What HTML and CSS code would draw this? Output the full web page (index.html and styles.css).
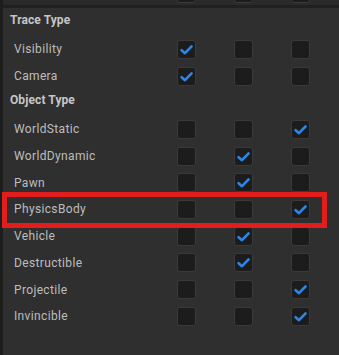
FILE: index.html
```html
<!DOCTYPE html>
<html lang="en">
<head>
	<meta charset="UTF-8">
	<title>Collision Responses</title>
	<link rel="stylesheet" href="styles.css">
</head>
<body>
	<div class="panel">
		<div class="top_strip">
			<span class="cell"></span>
			<span class="box"></span>
			<span class="cell"></span>
			<span class="box"></span>
			<span class="cell"></span>
			<span class="box"></span>
		</div>
		<div class="separator"></div>

		<div class="heading">Trace Type</div>
		<div class="row">
			<span class="label">Visibility</span>
			<span class="box on"></span><span></span>
			<span class="box"></span><span></span>
			<span class="box"></span>
		</div>
		<div class="row">
			<span class="label">Camera</span>
			<span class="box on"></span><span></span>
			<span class="box"></span><span></span>
			<span class="box"></span>
		</div>

		<div class="heading heading_obj">Object Type</div>
		<div class="row">
			<span class="label">WorldStatic</span>
			<span class="box"></span><span></span>
			<span class="box"></span><span></span>
			<span class="box on"></span>
		</div>
		<div class="row">
			<span class="label">WorldDynamic</span>
			<span class="box"></span><span></span>
			<span class="box on"></span><span></span>
			<span class="box"></span>
		</div>
		<div class="row">
			<span class="label">Pawn</span>
			<span class="box"></span><span></span>
			<span class="box on"></span><span></span>
			<span class="box"></span>
		</div>
		<div class="row row_marked">
			<span class="label">PhysicsBody</span>
			<span class="box"></span><span></span>
			<span class="box"></span><span></span>
			<span class="box on"></span>
			<div class="highlight"></div>
		</div>
		<div class="row">
			<span class="label">Vehicle</span>
			<span class="box"></span><span></span>
			<span class="box on"></span><span></span>
			<span class="box"></span>
		</div>
		<div class="row">
			<span class="label">Destructible</span>
			<span class="box"></span><span></span>
			<span class="box on"></span><span></span>
			<span class="box"></span>
		</div>
		<div class="row">
			<span class="label">Projectile</span>
			<span class="box"></span><span></span>
			<span class="box"></span><span></span>
			<span class="box on"></span>
		</div>
		<div class="row">
			<span class="label">Invincible</span>
			<span class="box"></span><span></span>
			<span class="box"></span><span></span>
			<span class="box on"></span>
		</div>
	</div>
</body>
</html>
```

FILE: styles.css
```css
*{
	margin:0;
	padding:0;
	box-sizing:border-box;
}

body{
	background-color:#2f2f2f;
	font-family:Roboto, "Liberation Sans", sans-serif;
	font-size:12px;
	color:#bdbdbd;
}

.panel{
	border-left:3px solid #1d1d1d;
	min-height:355px;
	position:relative;
}

.top_strip{
	display:grid;
	grid-template-columns:174px 19px 38px 19px 38px 19px;
	height:5px;
	overflow:hidden;
	background-color:#2a2a2a;
}

.top_strip .box{
	margin-top:-16px;
}

.separator{
	height:3px;
	background-color:#202020;
}

.heading{
	height:28px;
	padding:0 0 4px 7px;
	display:flex;
	align-items:center;
	font-weight:bold;
	color:#c6c6c6;
	letter-spacing:0.1px;
}

.heading_obj{
	height:26.7px;
	padding-top:0;
	padding-bottom:6px;
}

.row{
	display:grid;
	grid-template-columns:174px 19px 38px 19px 38px 19px;
	align-items:center;
	height:26.7px;
}

.row:nth-of-type(2),
.row:nth-of-type(3){
	height:27px;
}

.label{
	padding-left:11px;
	letter-spacing:0.35px;
}

.box{
	display:block;
	width:19px;
	height:19px;
	border:1px solid #3a3a3a;
	border-radius:3px;
	background-color:#1c1c1c;
}

.box.on{
	background:#1c1c1c url("data:image/svg+xml,%3Csvg xmlns='http://www.w3.org/2000/svg' width='17' height='17' viewBox='0 0 17 17'%3E%3Cpath d='M3.6 9.2 L7 12.2 L13.6 5.4' fill='none' stroke='%232d86e6' stroke-width='2.6' stroke-linecap='round' stroke-linejoin='round'/%3E%3C/svg%3E") no-repeat center;
}

.row_marked{
	position:relative;
}

.highlight{
	position:absolute;
	left:-1px;
	top:-4px;
	width:325px;
	height:36px;
	border:5px solid #e31c1c;
	pointer-events:none;
}
```
